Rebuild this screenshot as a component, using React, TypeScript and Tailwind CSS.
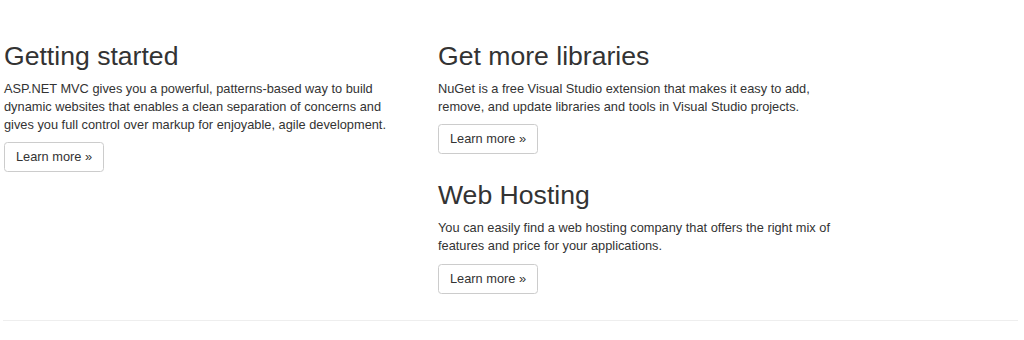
import React from "react";

interface SectionProps {
  title: string;
  text: string;
}

const Section: React.FC<SectionProps> = ({ title, text }) => (
  <div className="w-[407px]">
    <h2 className="mt-[17.7px] mb-[8.9px] text-[26.6px] leading-[29.3px] font-normal">
      {title}
    </h2>
    <p className="mb-[8.9px] text-[12.8px] leading-[17.7px]">{text}</p>
    <div className="mb-[8.9px]">
      <a
        href="#"
        className="inline-block h-[30px] rounded-[3.5px] border border-[#ccc] bg-white px-[11px] text-[12.8px] leading-[28px] text-[#333] whitespace-nowrap"
      >
        Learn more &raquo;
      </a>
    </div>
  </div>
);

export default function App() {
  return (
    <div className="min-h-[340px] w-full bg-white pt-[24.3px] font-['Liberation_Sans',Arial,sans-serif] text-[#333]">
      <div className="flex gap-[27px] pl-[4px]">
        <Section
          title="Getting started"
          text="ASP.NET MVC gives you a powerful, patterns-based way to build dynamic websites that enables a clean separation of concerns and gives you full control over markup for enjoyable, agile development."
        />
        <div className="flex flex-col">
          <Section
            title="Get more libraries"
            text="NuGet is a free Visual Studio extension that makes it easy to add, remove, and update libraries and tools in Visual Studio projects."
          />
          <Section
            title="Web Hosting"
            text="You can easily find a web hosting company that offers the right mix of features and price for your applications."
          />
        </div>
      </div>
      <hr className="mt-[17.7px] ml-[3px] mr-[6px] border-0 border-t border-[#eee]" />
    </div>
  );
}
